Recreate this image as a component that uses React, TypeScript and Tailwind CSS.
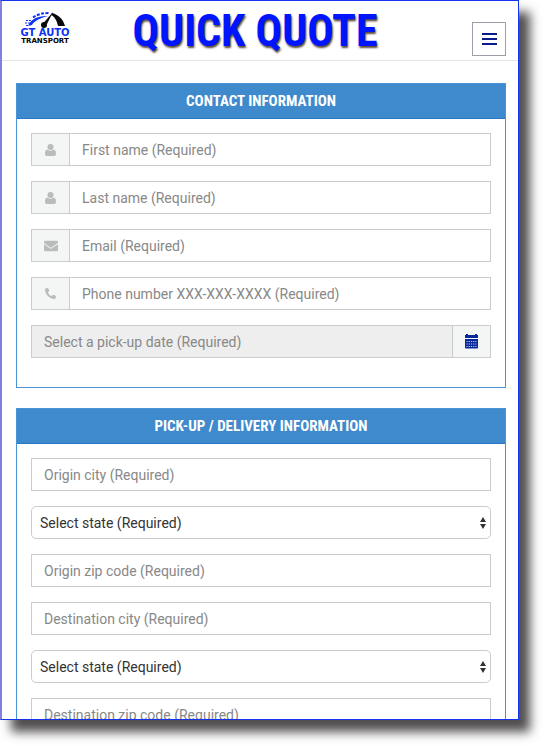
import { useId, type ReactNode } from "react";
import { FaEnvelope, FaPhoneAlt } from "react-icons/fa";

const fieldBorder = "border border-[#cccccc]";
const textInput =
  "h-[33px] w-full min-w-0 px-3 text-[14px] leading-5 text-[#333333] outline-none placeholder:text-[#888888] placeholder:opacity-100";

function Logo() {
  return (
    <a href="#home" aria-label="GT Auto Transport" className="mb-1 flex w-[50px] flex-col items-center">
      <svg viewBox="0 0 48 16" className="h-4 w-12" fill="none">
        <path d="M7 14 C10 7 17 3.500 27 4 C19 6 13 9 11 13 Z" fill="#0b32f5" />
        <path d="M5 8.500h5M4 11h5M5 13.500h3" stroke="#0b32f5" strokeWidth="1" strokeDasharray="2 1" />
        <path d="M12 5.500 C17 2 22 1 29 1" stroke="#0b32f5" strokeWidth="2" strokeDasharray="3 1.500" />
        <path d="M31 1 C38 3 42 7 44 14 L37 14 C36 9 34 5 30 3 Z" fill="#0a0a0a" />
        <path d="M32 0 L25.500 13 L22 11.500 Z" fill="#0a0a0a" />
        <circle cx="23" cy="13" r="3" fill="#0a0a0a" />
      </svg>
      <span className="font-['DejaVu_Sans',sans-serif] text-[10px] leading-[10px] font-bold whitespace-nowrap text-[#0b32f5]">
        GT AUTO
      </span>
      <span className="font-['DejaVu_Sans',sans-serif] text-[7px] leading-[7px] font-bold text-black">TRANSPORT</span>
    </a>
  );
}

function UserIcon() {
  return (
    <svg viewBox="0 0 11 12" className="h-3 w-[11px]" fill="currentColor">
      <circle cx="5.500" cy="3" r="3" />
      <path d="M2.600 5.500C.7 5.700 0 7.500 0 9.700 0 11.200.8 12 2 12h7c1.200 0 2-.8 2-2.300 0-2.200-.7-4-2.600-4.200a4 4 0 0 1-5.800 0z" />
    </svg>
  );
}

function CalendarIcon() {
  return (
    <svg viewBox="0 0 13 15" className="h-[15px] w-[13px]" fill="#06289b">
      <path d="M0 1h1V0h2v1h7V0h2v1h1v3H0z" />
      <path d="M0 5h13v8.500a1 1 0 0 1-1 1H1a1 1 0 0 1-1-1z" />
      <path d="M1.500 7.500h10M1.500 10h10M1.500 12.500h10" stroke="#b9c5ee" strokeWidth="1" strokeDasharray="1.200 1" />
    </svg>
  );
}

function Panel({ title, children }: { title: string; children: ReactNode }) {
  return (
    <section className="border border-[#4a94d6]">
      <h2 className="border-b border-[#2a79c4] bg-[#3f8acc] text-center font-['Roboto_Condensed','Liberation_Sans_Narrow',Roboto,sans-serif] text-[15px] leading-[34px] font-bold text-white">
        {title}
      </h2>
      <div className="flex flex-col gap-[15px] px-[14px] pt-[14px] pb-[29px]">{children}</div>
    </section>
  );
}

function Field({ label, icon, type = "text" }: { label: string; icon?: ReactNode; type?: string }) {
  const id = useId();
  return (
    <div className={`flex h-[33px] bg-white ${fieldBorder}`}>
      {icon && (
        <label
          htmlFor={id}
          aria-label={label}
          className="flex w-[38px] shrink-0 items-center justify-center border-r border-[#cccccc] bg-[#f4f6f6] text-[#bbbbbb]"
        >
          {icon}
        </label>
      )}
      <input id={id} type={type} aria-label={label} placeholder={label} className={`${textInput} h-full`} />
    </div>
  );
}

function DateField({ label }: { label: string }) {
  return (
    <div className={`flex h-[33px] ${fieldBorder}`}>
      <input readOnly aria-label={label} placeholder={label} className={`${textInput} h-full bg-[#eeeeee]`} />
      <button
        type="button"
        aria-label="Open calendar"
        className="flex w-[38px] shrink-0 items-center justify-center border-l border-[#cccccc] bg-[#f4f6f6]"
      >
        <CalendarIcon />
      </button>
    </div>
  );
}

function StateSelect({ label }: { label: string }) {
  return (
    <div className="relative h-[33px]">
      <select
        aria-label={label}
        className={`h-full w-full appearance-none rounded-[5px] bg-white px-2 text-[14px] leading-5 text-[#333333] ${fieldBorder}`}
      >
        <option>Select state (Required)</option>
      </select>
      <svg viewBox="0 0 6 12" className="pointer-events-none absolute top-[11px] right-[5px] h-3 w-[6px]" fill="#333333">
        <path d="M3 0 6 5H0zM3 12 0 7h6z" />
      </svg>
    </div>
  );
}

export default function App() {
  return (
    <div className="h-screen bg-white pr-[34px] pb-[35px] font-[Roboto,sans-serif]">
      <div className="h-full overflow-hidden border border-l-2 border-[#1432f0] border-l-[#8080e0] bg-white shadow-[11px_12px_10px_#524f50]">
        <header className="flex h-[60px] items-center border-b border-[#e6e6e6] pr-3 pl-[18px]">
          <Logo />
          <h1 className="flex-1 pr-8 text-center font-['Roboto_Condensed','Liberation_Sans_Narrow',Roboto,sans-serif] text-[44px] leading-[60px] font-bold whitespace-nowrap text-[#0015ff] [text-shadow:1px_2px_2px_#5a4a3a]">
            QUICK QUOTE
          </h1>
          <button
            type="button"
            aria-label="Open menu"
            className="mt-4 flex size-[34px] shrink-0 flex-col items-center justify-center gap-[3px] border border-[#9a9fa8]"
          >
            <span className="h-[2px] w-[15px] bg-[#0a1a8c]" />
            <span className="h-[2px] w-[15px] bg-[#0a1a8c]" />
            <span className="h-[2px] w-[15px] bg-[#0a1a8c]" />
          </button>
        </header>
        <main className="flex flex-col gap-5 pt-[22px] pr-3 pl-[14px]">
          <Panel title="CONTACT INFORMATION">
            <Field label="First name (Required)" icon={<UserIcon />} />
            <Field label="Last name (Required)" icon={<UserIcon />} />
            <Field label="Email (Required)" type="email" icon={<FaEnvelope size={14} />} />
            <Field
              label="Phone number XXX-XXX-XXXX (Required)"
              type="tel"
              icon={<FaPhoneAlt size={11} className="-scale-x-100 rotate-90" />}
            />
            <DateField label="Select a pick-up date (Required)" />
          </Panel>
          <Panel title="PICK-UP / DELIVERY INFORMATION">
            <Field label="Origin city (Required)" />
            <StateSelect label="Origin state" />
            <Field label="Origin zip code (Required)" />
            <Field label="Destination city (Required)" />
            <StateSelect label="Destination state" />
            <Field label="Destination zip code (Required)" />
          </Panel>
        </main>
      </div>
    </div>
  );
}
